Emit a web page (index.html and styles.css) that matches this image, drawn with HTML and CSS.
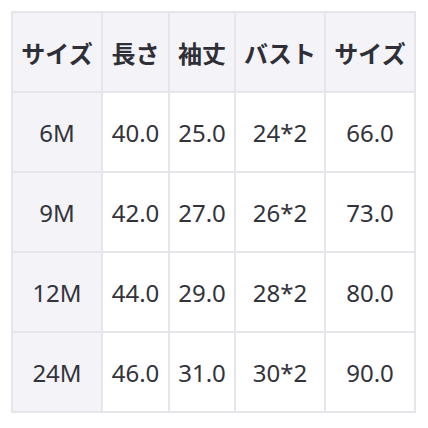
FILE: index.html
```html
<!DOCTYPE html>
<html lang="ja">
<head>
<meta charset="utf-8">
<link rel="stylesheet" href="styles.css">
</head>
<body>
<table class="size-table">
  <colgroup>
    <col class="c-wide"><col class="c-narrow"><col class="c-narrow2"><col class="c-wide"><col class="c-wide">
  </colgroup>
  <thead>
    <tr><th>サイズ</th><th>長さ</th><th>袖丈</th><th>バスト</th><th>サイズ</th></tr>
  </thead>
  <tbody>
    <tr><th>6M</th><td>40.0</td><td>25.0</td><td>24*2</td><td>66.0</td></tr>
    <tr><th>9M</th><td>42.0</td><td>27.0</td><td>26*2</td><td>73.0</td></tr>
    <tr><th>12M</th><td>44.0</td><td>29.0</td><td>28*2</td><td>80.0</td></tr>
    <tr><th>24M</th><td>46.0</td><td>31.0</td><td>30*2</td><td>90.0</td></tr>
  </tbody>
</table>
</body>
</html>
```
FILE: styles.css
```css
html, body {
  margin: 0;
  background: #ffffff;
}
body {
  padding: 11px 0 0 11px;
  font-family: "Noto Sans", "Noto Sans CJK JP", sans-serif;
  color: #33333b;
}
.size-table {
  border-collapse: collapse;
  table-layout: fixed;
  width: 405px;
}
.c-wide { width: 90px; }
.c-narrow { width: 67px; }
.c-narrow2 { width: 66px; }
.size-table th,
.size-table td {
  border: 2px solid #e6e6ea;
  height: 78px;
  padding: 0;
  text-align: center;
  vertical-align: middle;
  font-size: 24px;
  font-weight: 400;
  white-space: nowrap;
}
.size-table thead th {
  background: #f4f4f8;
  font-weight: 700;
  font-family: "Noto Sans CJK JP", sans-serif;
  color: #2f2f37;
}
.size-table tbody th {
  background: #f4f4f8;
}
```
